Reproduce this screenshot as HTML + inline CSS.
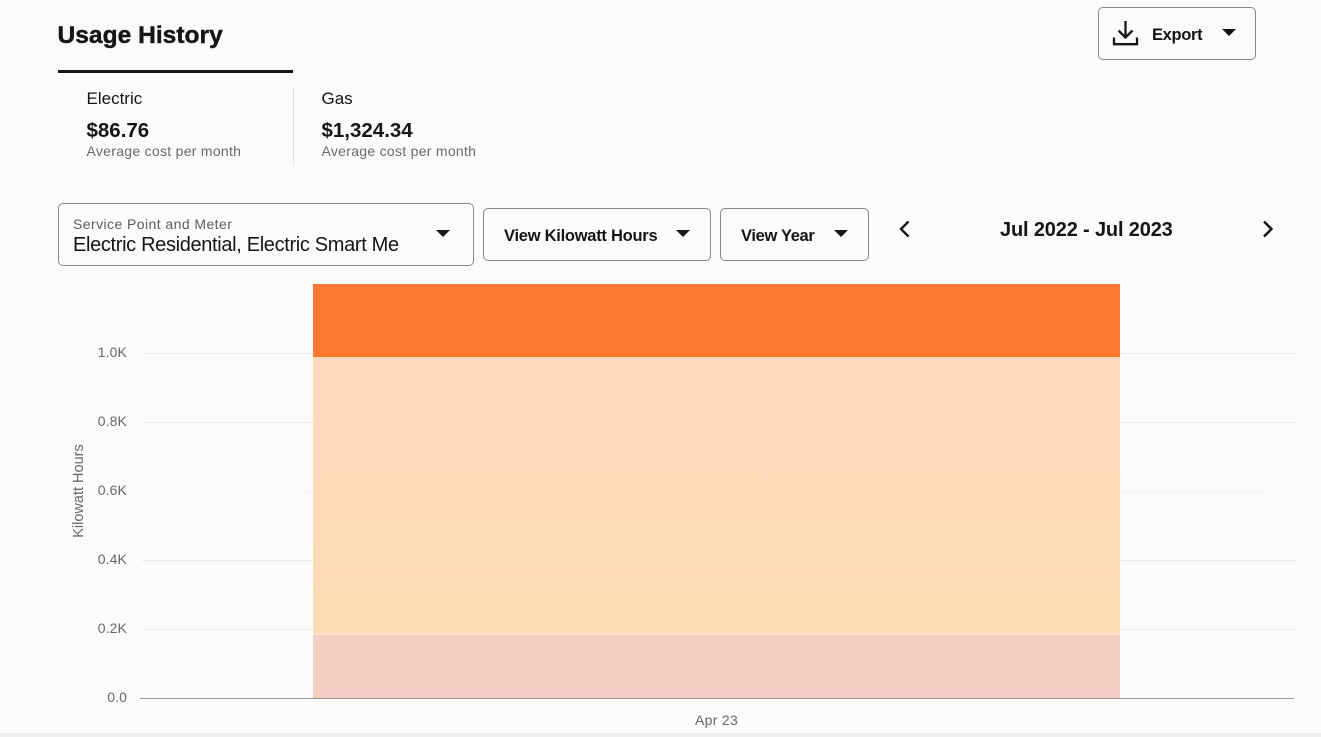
<!DOCTYPE html>
<html lang="en">
<head>
<meta charset="utf-8">
<title>Usage History</title>
<style>
html,body{margin:0;padding:0}
body{width:1321px;height:737px;overflow:hidden;background:#fdfbf9;position:relative;font-family:"Liberation Sans",sans-serif;color:#161513}
.a{position:absolute;white-space:nowrap;line-height:1}
.box{position:absolute;box-sizing:border-box;border:1px solid #8a8886;border-radius:5px;background:#fdfbf9}
.tri{position:absolute;width:0;height:0;border-left:7.5px solid transparent;border-right:7.5px solid transparent;border-top:7.5px solid #161513}
.b{font-weight:bold}
.sub{font-size:14px;color:#6a6866;letter-spacing:.29px}
.y{position:absolute;left:80px;width:47px;text-align:right;font-size:14px;line-height:1;color:#6a6866;letter-spacing:.1px}
.g{position:absolute;height:1px;background:#eceae7}
</style>
</head>
<body>
<div class="a b" style="left:57.500px;top:24px;font-size:24.500px;letter-spacing:.04px;-webkit-text-stroke:.45px #161513">Usage History</div>
<div class="a" style="left:58px;top:70px;width:235px;height:3px;background:#161513"></div>
<div class="a" style="left:293px;top:88px;width:1px;height:78px;background:#e4e2df"></div>

<div class="a" style="left:86.500px;top:90px;font-size:17px">Electric</div>
<div class="a b" style="left:86.500px;top:121px;font-size:20.500px">$86.76</div>
<div class="a sub" style="left:86.500px;top:144px">Average cost per month</div>

<div class="a" style="left:321.500px;top:90px;font-size:17px">Gas</div>
<div class="a b" style="left:321.500px;top:121px;font-size:20.500px">$1,324.34</div>
<div class="a sub" style="left:321.500px;top:144px">Average cost per month</div>

<div class="box" style="left:1098px;top:7px;width:158px;height:53px"></div>
<svg class="a" style="left:1112px;top:20px" width="27" height="27" viewBox="0 0 27 27" fill="none" stroke="#161513" stroke-width="2.3"><path d="M13.500 1V17.500M6.500 10.500l7 7 7-7"/><path d="M2 17.500V24.200H25V17.500"/></svg>
<div class="a b" style="left:1152px;top:27px;font-size:16.500px;letter-spacing:-.33px">Export</div>
<div class="tri" style="left:1222px;top:29px"></div>

<div class="box" style="left:58px;top:203px;width:416px;height:63px"></div>
<div class="a" style="left:73px;top:217px;font-size:14px;color:#5f5d5b;letter-spacing:.43px">Service Point and Meter</div>
<div class="a" style="left:73px;top:235px;font-size:20px;letter-spacing:-.34px">Electric Residential, Electric Smart Me</div>
<div class="tri" style="left:435.500px;top:230px"></div>

<div class="box" style="left:483px;top:208px;width:228px;height:53px"></div>
<div class="a b" style="left:504px;top:228px;font-size:16.500px;letter-spacing:-.26px">View Kilowatt Hours</div>
<div class="tri" style="left:676px;top:230px"></div>

<div class="box" style="left:720px;top:208px;width:149px;height:53px"></div>
<div class="a b" style="left:741px;top:228px;font-size:16.500px;letter-spacing:-.33px">View Year</div>
<div class="tri" style="left:834px;top:230px"></div>

<svg class="a" style="left:896px;top:220px" width="18" height="18" viewBox="0 0 18 18" fill="none" stroke="#161513" stroke-width="2.4"><path d="M12.500 1.500L5 9l7.500 7.500"/></svg>
<div class="a b" style="left:1000px;top:220px;font-size:20px;letter-spacing:-.16px">Jul 2022 - Jul 2023</div>
<svg class="a" style="left:1259px;top:220px" width="18" height="18" viewBox="0 0 18 18" fill="none" stroke="#161513" stroke-width="2.4"><path d="M5 1.500L12.500 9 5 16.500"/></svg>

<div class="g" style="left:142px;top:353px;width:1154px"></div>
<div class="g" style="left:142px;top:422px;width:1154px"></div>
<div class="g" style="left:304px;top:491px;width:960px;background:#f3f1ee"></div>
<div class="g" style="left:142px;top:560px;width:1154px"></div>
<div class="g" style="left:142px;top:629px;width:1154px"></div>

<div class="y" style="top:345px">1.0K</div>
<div class="y" style="top:414px">0.8K</div>
<div class="y" style="top:483px">0.6K</div>
<div class="y" style="top:552px">0.4K</div>
<div class="y" style="top:621px">0.2K</div>
<div class="y" style="top:690px">0.0</div>

<div class="a" style="left:79px;top:490.500px;font-size:14.500px;color:#6a6866;transform:translate(-50%,-50%) rotate(-90deg)">Kilowatt Hours</div>

<div class="a" style="left:313px;top:284px;width:807px;height:73px;background:#fb7830"></div>
<div class="a" style="left:313px;top:357px;width:807px;height:276px;background:linear-gradient(#fcd9bd,#fbdbb3)"></div>
<div class="a" style="left:313px;top:633px;width:807px;height:2px;background:#fbe3cb"></div>
<div class="a" style="left:313px;top:635px;width:807px;height:63px;background:linear-gradient(#f2d0c0,#f3cdc4)"></div>

<div class="a" style="left:140px;top:698px;width:1154px;height:1px;background:#9a9896"></div>
<div class="a" style="left:695px;top:713px;font-size:14px;color:#6a6866;letter-spacing:.3px">Apr 23</div>
<div class="a" style="left:0;top:733px;width:1321px;height:4px;background:#f1efed"></div>
</body>
</html>
